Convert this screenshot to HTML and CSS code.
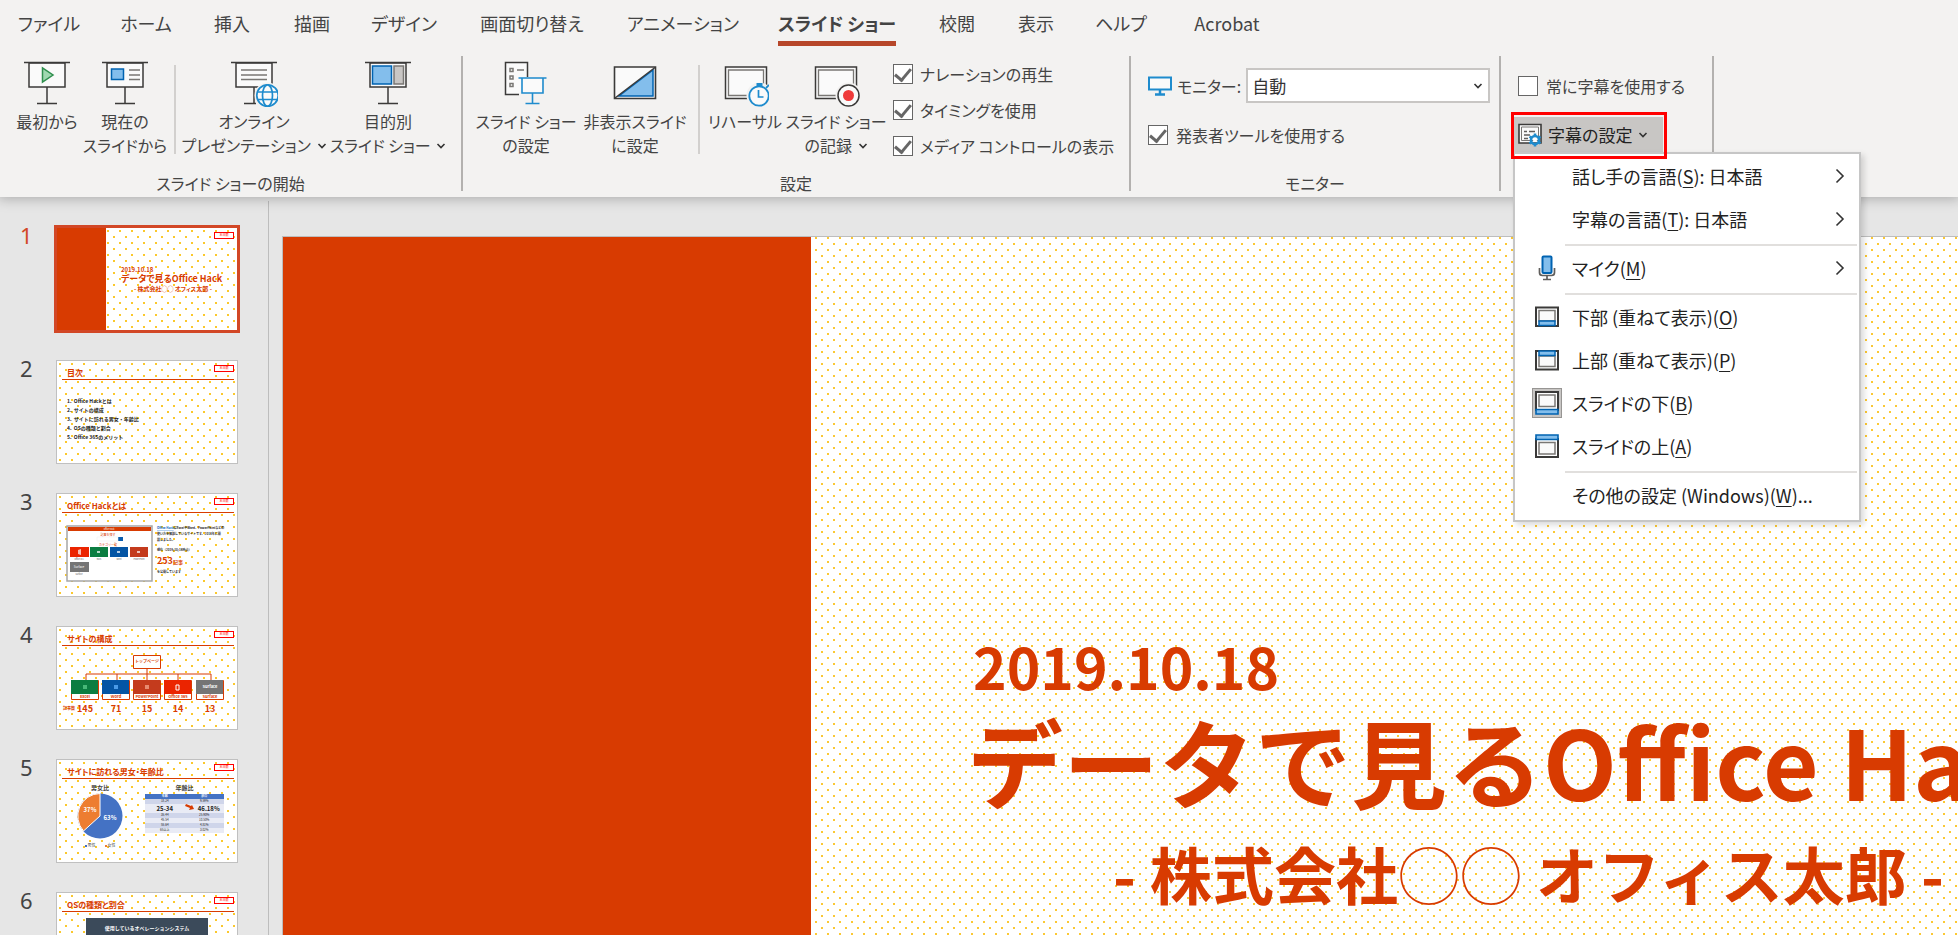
FILE: index.html
```html
<!DOCTYPE html>
<html lang="ja">
<head>
<meta charset="utf-8">
<title>スライド ショー</title>
<link rel="stylesheet" href="styles.css">
</head>
<body>
<svg class="defs" width="0" height="0" aria-hidden="true">
  <symbol id="chev" viewBox="0 0 10 8"><path d="M1.5 2 5 5.5 8.5 2" fill="none" stroke="#333" stroke-width="1.600"/></symbol>
  <symbol id="arrow" viewBox="0 0 10 16"><path d="M1.5 1.500 8 8 1.500 14.500" fill="none" stroke="#333" stroke-width="1.600"/></symbol>
</svg>
<header class="ribbon">
  <nav class="tabs">
    <button class="tab">ファイル</button>
    <button class="tab">ホーム</button>
    <button class="tab">挿入</button>
    <button class="tab">描画</button>
    <button class="tab">デザイン</button>
    <button class="tab">画面切り替え</button>
    <button class="tab">アニメーション</button>
    <button class="tab active"><span>スライド ショー</span></button>
    <button class="tab">校閲</button>
    <button class="tab">表示</button>
    <button class="tab">ヘルプ</button>
    <button class="tab">Acrobat</button>
  </nav>
  <div class="groups">
    <section class="group start">
      <div class="tools">
        <button class="big w78">
          <svg width="48" height="48" viewBox="0 0 48 48"><path d="M6 2h36v24H6z" fill="#fafafa" stroke="#3b3a39" stroke-width="1.500"/><path d="M1 1.500h46M24 26v16M14 42.500h20" stroke="#3b3a39" stroke-width="1.500"/><path d="M19.500 7v14l10.500-7z" fill="#9fd8b0" stroke="#2f8f4e" stroke-width="1.500"/></svg>
          <span>最初から</span>
        </button>
        <button class="big w78">
          <svg width="48" height="48" viewBox="0 0 48 48"><path d="M6 2h36v24H6z" fill="#fafafa" stroke="#3b3a39" stroke-width="1.500"/><path d="M1 1.500h46M24 26v16M14 42.500h20" stroke="#3b3a39" stroke-width="1.500"/><path d="M10.500 8h12v10.500h-12z" fill="#83beec" stroke="#0063b1" stroke-width="1.500"/><path d="M28 9h11M28 14h11M28 18.500h11" stroke="#797774" stroke-width="1.500"/></svg>
          <span>現在の<br>スライドから</span>
        </button>
        <i class="rule"></i>
        <button class="big w138">
          <svg width="48" height="48" viewBox="0 0 48 48"><path d="M6 2h36v24H6z" fill="#fafafa" stroke="#3b3a39" stroke-width="1.500"/><path d="M1 1.500h46M24 26v16M14 42.500h12" stroke="#3b3a39" stroke-width="1.500"/><path d="M11 9h26M11 14h26M11 18.500h26" stroke="#797774" stroke-width="1.500"/><circle cx="37.500" cy="34.500" r="13" fill="#f3f2f1"/><g fill="#fafafa" stroke="#1e8bcd" stroke-width="1.700"><circle cx="37.500" cy="34.500" r="10.700"/><ellipse cx="37.500" cy="34.500" rx="5" ry="10.700"/><path d="M27.500 31h20M27.500 38.500h20"/></g></svg>
          <span>オンライン<br>プレゼンテーション <svg class="chev" width="10" height="8"><use href="#chev"/></svg></span>
        </button>
        <button class="big w124">
          <svg width="48" height="48" viewBox="0 0 48 48"><path d="M6 2h36v24H6z" fill="#fafafa" stroke="#3b3a39" stroke-width="1.500"/><path d="M1 1.500h46M24 26v16M14 42.500h20" stroke="#3b3a39" stroke-width="1.500"/><path d="M8.500 5h19v18h-19z" fill="#83beec" stroke="#0063b1" stroke-width="1.500"/><path d="M30 5h9.500v18H30z" fill="#c8c6c4" stroke="#797774" stroke-width="1.500"/></svg>
          <span>目的別<br>スライド ショー <svg class="chev" width="10" height="8"><use href="#chev"/></svg></span>
        </button>
      </div>
      <h2>スライド ショーの開始</h2>
    </section>
    <section class="group setup">
      <div class="tools">
        <button class="big w98">
          <svg width="48" height="48" viewBox="0 0 48 48"><path d="M25.500 16V1.500h-22v32H17" fill="#fafafa" stroke="#3b3a39" stroke-width="1.500"/><path d="M8 7.500h3v3H8zM8 15h3v3H8zM8 22.500h3v3H8zM15 9h7" fill="none" stroke="#797774" stroke-width="1.500"/><path d="M20 17.500h20V32H20z" fill="#fafafa"/><path d="M20 17v15h21V17M16.500 17h28M30.500 32v10M23.500 42.500h14" fill="none" stroke="#1e8bcd" stroke-width="1.600"/></svg>
          <span>スライド ショー<br>の設定</span>
        </button>
        <button class="big w106">
          <svg width="48" height="48" viewBox="0 0 48 48"><path d="M3.500 6h41v31.500h-41z" fill="#fafafa" stroke="#3b3a39" stroke-width="1.600"/><path d="M42 9v26H8z" fill="#83beec" stroke="#0063b1" stroke-width="1.500"/><path d="M4 37 44 6.500" stroke="#3b3a39" stroke-width="1.500"/></svg>
          <span>非表示スライド<br>に設定</span>
        </button>
        <i class="rule"></i>
        <button class="big w74">
          <svg width="48" height="48" viewBox="0 0 48 48"><path d="M4.500 6h41v31.500h-41z" fill="#fafafa" stroke="#3b3a39" stroke-width="1.500"/><path d="M7.500 9h35v25.500h-35z" fill="none" stroke="#797774" stroke-width="1.300"/><circle cx="38.500" cy="34.500" r="13" fill="#f3f2f1"/><path d="M35.500 22h6v4h-6z" fill="#1e8bcd"/><path d="m45 27 3-3" stroke="#1e8bcd" stroke-width="1.800"/><circle cx="38" cy="35" r="9.700" fill="#fafafa" stroke="#1e8bcd" stroke-width="1.800"/><path d="M37.500 29V36h5" fill="none" stroke="#1e8bcd" stroke-width="1.700"/></svg>
          <span>リハーサル</span>
        </button>
        <button class="big w102">
          <svg width="48" height="48" viewBox="0 0 48 48"><path d="M3.500 6h41v31.500h-41z" fill="#fafafa" stroke="#3b3a39" stroke-width="1.500"/><path d="M6.500 9h35v25.500h-35z" fill="none" stroke="#797774" stroke-width="1.300"/><circle cx="36.500" cy="34.500" r="13" fill="#f3f2f1"/><circle cx="36.500" cy="34.500" r="10.500" fill="#fafafa" stroke="#3b3a39" stroke-width="1.500"/><circle cx="36.500" cy="34.500" r="5.500" fill="#ef3b3b"/></svg>
          <span>スライド ショー<br>の記録 <svg class="chev" width="10" height="8"><use href="#chev"/></svg></span>
        </button>
        <div class="checks">
          <label><input type="checkbox" checked>ナレーションの再生</label>
          <label><input type="checkbox" checked>タイミングを使用</label>
          <label><input type="checkbox" checked>メディア コントロールの表示</label>
        </div>
      </div>
      <h2>設定</h2>
    </section>
    <section class="group monitor">
      <div class="rows">
        <div class="row">
          <svg width="24" height="20" viewBox="0 0 24 20"><path d="M1 1.500h22v12H1z" fill="#fafafa" stroke="#1e8bcd" stroke-width="2"/><path d="M12 14v4M7 18.500h10" stroke="#1e8bcd" stroke-width="2.500"/></svg>
          <label for="mon">モニター:</label>
          <span class="select"><select id="mon"><option>自動</option></select><svg width="10" height="8"><use href="#chev"/></svg></span>
        </div>
        <label class="row"><input type="checkbox" checked>発表者ツールを使用する</label>
      </div>
      <h2>モニター</h2>
    </section>
    <section class="group caption">
      <div class="rows">
        <label class="row"><input type="checkbox">常に字幕を使用する</label>
        <div class="row drop">
          <button class="dropbtn">
            <svg width="24" height="24" viewBox="0 0 24 24"><path d="M1 1.500h22V20H1z" fill="#fafafa" stroke="#3b3a39" stroke-width="1.600"/><path d="M3.500 4h17v13.500h-17z" fill="none" stroke="#797774"/><path d="M6 8.500h3M11 8.500h6M6 12h6M6 15.500h4" stroke="#605e5c" stroke-width="1.400"/><g stroke="#1e8bcd" fill="none"><circle cx="17" cy="17" r="4" stroke-width="2.600"/><path d="M17 10.500v3M17 20.500v3M11.500 13.700l2.600 1.500M19.900 18.800l2.600 1.500M11.500 20.300l2.600-1.500M19.900 15.200l2.600-1.500" stroke-width="2.600"/></g><circle cx="17" cy="17" r="2" fill="#fff"/></svg>
            <span>字幕の設定</span><svg width="10" height="8"><use href="#chev"/></svg>
          </button>
          <div class="menu" role="menu">
            <button role="menuitem"><i></i><span>話し手の言語(<u>S</u>): 日本語</span><svg width="10" height="16"><use href="#arrow"/></svg></button>
            <button role="menuitem"><i></i><span>字幕の言語(<u>T</u>): 日本語</span><svg width="10" height="16"><use href="#arrow"/></svg></button>
            <hr>
            <button role="menuitem"><i><svg width="24" height="26" viewBox="0 0 24 26"><path d="M4.500 13v4.500q0 3 3 3h9q3 0 3-3V13M12 20v4M8 24.500h8" fill="none" stroke="#605e5c" stroke-width="1.700"/><rect x="7.500" y="1.500" width="9" height="16.500" rx="1" fill="#83beec" stroke="#0063b1" stroke-width="2"/></svg></i><span>マイク(<u>M</u>)</span><svg width="10" height="16"><use href="#arrow"/></svg></button>
            <hr>
            <button role="menuitem"><i><svg width="24" height="24" viewBox="0 0 24 24"><path d="M1 2.500h22V21H1z" fill="#fff" stroke="#3b3a39" stroke-width="2"/><path d="M4 5.500h16V16H4z" fill="#fafafa" stroke="#797774" stroke-width="1.500"/><path d="M4 16h16v4.500H4z" fill="#83beec" stroke="#0063b1" stroke-width="1.500"/></svg></i><span>下部 (重ねて表示)(<u>O</u>)</span></button>
            <button role="menuitem"><i><svg width="24" height="24" viewBox="0 0 24 24"><path d="M1 3h22v18.500H1z" fill="#fff" stroke="#3b3a39" stroke-width="2"/><path d="M4 8h16v10.500H4z" fill="#fafafa" stroke="#797774" stroke-width="1.500"/><path d="M4 3h16v4.500H4z" fill="#83beec" stroke="#0063b1" stroke-width="1.500"/></svg></i><span>上部 (重ねて表示)(<u>P</u>)</span></button>
            <button role="menuitem"><i class="chosen"><svg width="24" height="24" viewBox="0 0 24 24"><path d="M1 1h22v18H1z" fill="#fff" stroke="#3b3a39" stroke-width="2"/><path d="M4 4h16v11.500H4z" fill="#fafafa" stroke="#797774" stroke-width="1.500"/><path d="M1 18.500h22V23H1z" fill="#83beec" stroke="#0063b1" stroke-width="1.600"/></svg></i><span>スライドの下(<u>B</u>)</span></button>
            <button role="menuitem"><i><svg width="24" height="24" viewBox="0 0 24 24"><path d="M1 5h22v18H1z" fill="#fff" stroke="#3b3a39" stroke-width="2"/><path d="M4 8.500h16V20H4z" fill="#fafafa" stroke="#797774" stroke-width="1.500"/><path d="M1 1h22v4.500H1z" fill="#83beec" stroke="#0063b1" stroke-width="1.600"/></svg></i><span>スライドの上(<u>A</u>)</span></button>
            <hr>
            <button role="menuitem"><i></i><span>その他の設定 (Windows)(<u>W</u>)...</span></button>
          </div>
        </div>
      </div>
    </section>
  </div>
</header>
<main class="work">
  <aside class="pane">
    <div class="item sel"><b>1</b>
      <div class="thumb cover"><div class="band"></div><div class="badge">本日限</div>
        <div class="ctext"><p class="d">2019.10.18</p><p class="t">データで見るOffice Hack</p><p class="s">- 株式会社◯◯ オフィス太郎 -</p></div></div></div>
    <div class="item"><b>2</b>
      <div class="thumb"><div class="badge">本日限</div><h3>目次</h3>
        <ol><li>1.&nbsp; Office Hackとは</li><li>2.&nbsp; サイトの構成</li><li>3.&nbsp; サイトに訪れる男女・年齢比</li><li>4.&nbsp; OSの種類と割合</li><li>5.&nbsp; Office 365のメリット</li></ol></div></div>
    <div class="item"><b>3</b>
      <div class="thumb"><div class="badge">本日限</div><h3>Office Hackとは</h3>
        <svg class="body" viewBox="0 19 180 83">
          <path d="M10 32h85v55H10z" fill="#fff" stroke="#a6a6a6" stroke-width="1.500"/><path d="M11 33h83v4H11z" fill="#d83b01"/>
          <text x="52" y="36" font-size="2" fill="#fff" text-anchor="middle">Office Hack</text>
          <text x="51" y="42" font-size="3" fill="#d83b01" text-anchor="middle">記事を探す</text><path d="M61 43h5v4h-5z" fill="#0b5cad"/><path d="M40 43h21v4H40z" fill="none" stroke="#eee" stroke-width=".5"/>
          <text x="51" y="52" font-size="3" fill="#d83b01" text-anchor="middle">カテゴリ一覧</text>
          <path d="M13 53h19v10H13z" fill="#eb2400"/><path d="M33 53h18v10H33z" fill="#0b7d41"/><path d="M53 53h18v10H53z" fill="#0455a4"/><path d="M73 53h18v10H73z" fill="#c43b1d"/><path d="M13 68h19v10H13z" fill="#757575"/>
          <path d="M21 56l3-1v6l-3-1zM40 57h3v2h-3zM60 57h3v2h-3zM80 57h3v2h-3z" fill="#fff" opacity=".7"/>
          <text x="22" y="74" font-size="3" fill="#fff" text-anchor="middle">Surface</text>
          <g font-size="2" fill="#555" text-anchor="middle"><text x="22" y="66">Office 365</text><text x="42" y="66">Excel</text><text x="62" y="66">Word</text><text x="82" y="66">PowerPoint</text><text x="22" y="81">Surface</text></g>
          <g font-size="3" font-weight="700" fill="#222"><text x="100" y="35"><tspan fill="#0563c1" text-decoration="underline">Office Hack</tspan>はExcelやWord、PowerPointなどの</text><text x="100" y="41">使い方を解説しているサイトです。2018年に開</text><text x="100" y="47">設しました。</text><text x="100" y="57">現在（2019/10/18時点）</text><text x="100" y="79">を公開しています</text></g>
          <text x="100" y="70" font-size="9" font-weight="700" fill="#d83b01">253<tspan font-size="5">記事</tspan></text>
        </svg></div></div>
    <div class="item"><b>4</b>
      <div class="thumb"><div class="badge">本日限</div><h3>サイトの構成</h3>
        <svg class="body" viewBox="0 19 180 83">
          <path d="M90 42v11M29 53v-6h125v6M60 47v6M121 47v6" fill="none" stroke="#d83b01"/>
          <g fill="#fff" stroke="#d83b01"><path d="M76.500 28.500h27v13h-27zM14.500 53.500h27v19h-27zM45.500 53.500h27v19h-27zM76.500 53.500h27v19h-27zM107.500 53.500h27v19h-27zM139.500 53.500h27v19h-27z"/></g>
          <path d="M14 53h27v14H14z" fill="#0b7d41"/><path d="M45 53h27v14H45z" fill="#0455a4"/><path d="M76 53h27v14H76z" fill="#c43b1d"/><path d="M107 53h27v14h-27z" fill="#eb2400"/><path d="M139 53h27v14h-27z" fill="#757575"/>
          <path d="M26 58h4v4h-4z" fill="#48b878"/><path d="M57 58h4v4h-4z" fill="#4a9be8"/><path d="M88 58h4v4h-4z" fill="#e88b70"/><path d="M119 58h3v5h-3z" fill="none" stroke="#fff"/>
          <g font-size="4" font-weight="700" fill="#d83b01" text-anchor="middle"><text x="90" y="36">トップページ</text><text x="28" y="71">Excel</text><text x="59" y="71">Word</text><text x="90" y="71">PowerPoint</text><text x="121" y="71">Office 365</text><text x="153" y="71">Surface</text><text x="12" y="83">記事数</text><text x="153" y="61" fill="#fff">Surface</text></g>
          <g font-size="9" font-weight="700" fill="#d83b01" text-anchor="middle"><text x="28" y="85">145</text><text x="59" y="85">71</text><text x="90" y="85">15</text><text x="121" y="85">14</text><text x="153" y="85">13</text></g>
        </svg></div></div>
    <div class="item"><b>5</b>
      <div class="thumb"><div class="badge">本日限</div><h3>サイトに訪れる男女・年齢比</h3>
        <div class="charts">
          <figure><figcaption>男女比</figcaption>
            <svg width="52" height="46" viewBox="0 0 52 46"><circle cx="26" cy="23" r="22.500" fill="#4472c4"/><path d="M26 23V.5A22.500 22.500 0 0 0 9.500 38z" fill="#ed7d31" stroke="#fff"/><g font-size="6" font-weight="700" fill="#fff" text-anchor="middle"><text x="16" y="19">37%</text><text x="36" y="27">63%</text></g></svg>
            <div class="legend"><span class="m">男性</span><span class="f">女性</span></div></figure>
          <figure><figcaption>年齢比</figcaption>
            <table><tr><th>年齢</th><th>割合</th></tr><tr><td>18-24</td><td>9.59%</td></tr><tr class="hot"><td>25-34</td><td><svg width="9" height="7" viewBox="0 0 9 7"><path d="M1 0l5 2 1-1 2 4-5 1 1-2-5-2z" fill="#d83b01"/></svg>46.18%</td></tr><tr><td>35-44</td><td>25.90%</td></tr><tr><td>45-54</td><td>10.50%</td></tr><tr><td>55-64</td><td>4.81%</td></tr><tr><td>65以上</td><td>3.02%</td></tr></table></figure>
        </div></div></div>
    <div class="item"><b>6</b>
      <div class="thumb"><div class="badge">本日限</div><h3>OSの種類と割合</h3><div class="os">使用しているオペレーションシステム</div></div></div>
  </aside>
  <section class="canvas">
    <div class="slide">
      <div class="band"></div>
      <div class="copy">
        <p class="date">2019.10.18</p>
        <h1>データで見るOffice Hack</h1>
        <p class="sub">- 株式会社<span>◯◯</span> オフィス太郎 -</p>
      </div>
    </div>
  </section>
</main>
</body>
</html>
```
FILE: styles.css
```css
* { box-sizing: border-box; }
body {
  margin: 0;
  height: 100vh;
  display: flex;
  flex-direction: column;
  overflow: hidden;
  background: #e6e6e6;
  color: #444;
  font-family: "Noto Sans CJK JP", sans-serif;
  font-size: 16px;
  font-feature-settings: "palt";
}
button, select, input { font: inherit; font-feature-settings: inherit; color: inherit; margin: 0; }
button { border: 0; padding: 0; background: none; white-space: nowrap; }
h1, h2, h3, p, ol, figure { margin: 0; padding: 0; }
.defs { position: absolute; }

/* Ribbon */
.ribbon {
  position: relative;
  z-index: 2;
  flex: none;
  background: #f3f2f1;
  box-shadow: 0 0 12px 2px rgba(0, 0, 0, .25);
}
.tabs {
  display: grid;
  grid-template-columns: 98px 96px 76px 84px 100px 156px 146px 162px 78px 80px 90px 122px;
  height: 46px;
}
.tab { font-size: 18px; line-height: 46px; display: flex; justify-content: center; }
.tab.active { font-weight: 700; }
.tab.active span { border-bottom: 5px solid #b7472a; height: 46px; }
.groups { display: flex; padding: 10px 0 6px; height: 151px; }
.group {
  display: flex;
  flex-direction: column;
  justify-content: space-between;
  border-right: 2px solid #b3b1af;
}
.group h2 { font-size: 16px; font-weight: 400; line-height: 16px; text-align: center; }
.start { width: 463px; }
.setup { width: 668px; }
.monitor { width: 370px; }
.caption { width: 213px; }
.tools { display: flex; padding: 5px 0 0 8px; }
.setup .tools { padding-left: 14px; }
.big { display: flex; flex-direction: column; align-items: center; flex: none; }
.big > svg { display: block; flex: none; }
.big > span { line-height: 24px; }
.chev { margin-left: 2px; vertical-align: 2px; }
.w78 { width: 78px; }
.w138 { width: 138px; }
.w124 { width: 124px; margin-left: 3px; }
.w98 { width: 98px; }
.w106 { width: 106px; margin-left: 7px; }
.w74 { width: 74px; }
.w102 { width: 102px; margin-left: 3px; }
.rule { width: 2px; height: 89px; margin: 4px 9px 0 10px; background: #d2d0ce; flex: none; }
.setup .rule { margin-right: 8px; }
.checks { display: flex; flex-direction: column; margin: -5px 0 0 6px; }
.checks label { display: flex; align-items: center; gap: 7px; height: 36px; white-space: nowrap; }
input[type="checkbox"] {
  appearance: none;
  width: 20px;
  height: 20px;
  flex: none;
  background: #fff;
  border: 1px solid #666;
  display: grid;
  place-items: center;
}
input:checked::before {
  content: "";
  width: 7px;
  height: 13px;
  margin-bottom: 4px;
  border: solid #666;
  border-width: 0 3px 3px 0;
  transform: rotate(40deg);
}
.rows { padding: 5px 9px 0 17px; }
.row { display: flex; align-items: center; gap: 8px; height: 49px; white-space: nowrap; }
.monitor .row:first-child { gap: 5px; }
.select { display: flex; align-items: center; flex: 1; height: 35px; padding-right: 5px; border: 2px solid #c8c6c4; background: #fff; }
.select select { appearance: none; border: 0; background: none; flex: 1; padding: 0 4px; font-size: 17px; color: #333; }

/* Caption drop-down */
.drop { position: relative; margin-left: -4px; }
.dropbtn {
  position: relative;
  display: flex;
  align-items: center;
  gap: 6px;
  width: 149px;
  height: 36px;
  padding: 0 4px;
  background: #c8c6c4;
  color: #222;
  font-size: 17px;
}
.dropbtn::after { content: ""; position: absolute; inset: -5px -4px -6px -3px; border: 3px solid #f00; z-index: 3; }
.menu {
  position: absolute;
  left: -1px;
  top: 42px;
  width: 348px;
  padding-bottom: 4px;
  border: 2px solid #c6c6c6;
  background: #fff;
  color: #222;
  font-size: 18px;
  box-shadow: 3px 3px 6px rgba(0, 0, 0, .15);
}
.menu button { display: flex; align-items: center; width: 100%; height: 43px; padding: 0 14px 0 17px; }
.menu i { width: 30px; height: 30px; margin-right: 10px; display: grid; place-items: center; flex: none; }
.menu span { flex: 1; text-align: left; }
.menu u { text-underline-offset: 3px; text-decoration-thickness: 1px; }
.menu hr { height: 2px; margin: 4px 2px 0 50px; border: 0; background: #e1dfdd; }
.menu .chosen { background: #c8c6c4; outline: 1px solid #979593; outline-offset: -1px; }

/* Slide list */
.work { flex: 1; min-height: 0; display: flex; overflow: hidden; }
.pane {
  width: 269px;
  flex: none;
  margin-top: 4px;
  padding-top: 26px;
  border-right: 1px solid #bdbdbd;
  display: flex;
  flex-direction: column;
  gap: 29px;
}
.item { display: flex; flex: none; }
.item b { width: 56px; padding-left: 20px; flex: none; font: 400 22px/16px "Noto Sans", sans-serif; }
.sel b { color: #d24726; }
.thumb, .slide { background-color: #fff; background-size: 12px 12px; }
.thumb {
  position: relative;
  width: 182px;
  height: 104px;
  border: 1px solid #c0c0c0;
  overflow: hidden;
  background-image: conic-gradient(from 90deg at 10px 10px, #fbc82c 25%, transparent 0), conic-gradient(from 90deg at 10px 10px, #fbc82c 25%, transparent 0);
  background-position: 4px 4px, 10px 10px;
  color: #222;
}
.sel .thumb { border-color: #fff; outline: 3px solid #d24726; outline-offset: -1px; }
.badge {
  position: absolute;
  right: 3px;
  top: 4px;
  width: 20px;
  height: 7px;
  border: 1px solid #f00;
  background: #fff;
  color: #f00;
  font-size: 3px;
  line-height: 5px;
  text-align: center;
}
.thumb h3 { height: 19px; margin: 0 3px 0 5px; padding-left: 5px; border-bottom: 1px solid #d83b01; color: #d83b01; font-size: 8px; line-height: 23px; }
.thumb ol { list-style: none; padding: 16px 0 0 10px; font-size: 5px; font-weight: 700; line-height: 9px; font-feature-settings: normal; }
.thumb .body { display: block; width: 100%; font-feature-settings: normal; }
.cover { display: flex; align-items: center; }
.cover .band { width: 49px; height: 100%; background: #d83b01; }
.ctext { padding-left: 15px; color: #d83b01; font-weight: 700; white-space: nowrap; }
.ctext .d { font-size: 6px; line-height: 7px; }
.ctext .t { font-size: 9px; line-height: 11px; }
.ctext .s { font-size: 6px; line-height: 9px; padding-left: 13px; }
.charts { display: flex; gap: 19px; padding: 4px 0 0 17px; }
.charts figcaption { font-size: 6px; font-weight: 700; line-height: 10px; text-align: center; color: #444; }
.charts svg { display: block; }
.legend { display: flex; justify-content: center; gap: 9px; font-size: 4px; line-height: 12px; color: #444; }
.legend span::before { content: ""; display: inline-block; width: 2px; height: 2px; margin-right: 1px; background: #4472c4; }
.legend .f::before { background: #ed7d31; }
.charts table { width: 79px; margin-top: 1px; border-collapse: collapse; table-layout: fixed; font-size: 3px; line-height: 5px; text-align: center; }
.charts th { padding: 0; background: #4472c4; color: #fff; }
.charts td { padding: 0; background: #cfd5ea; }
.charts tr:nth-child(odd) td { background: #e9ebf5; }
.charts .hot td { font-size: 6px; font-weight: 700; line-height: 9px; }
.charts td svg { float: left; }
.os { width: 122px; height: 60px; margin: 6px 0 0 29px; background: #3b4a5a; color: #fff; font-size: 5px; font-weight: 700; line-height: 20px; text-align: center; font-feature-settings: normal; }

/* Slide being edited */
.canvas { flex: 1; min-width: 0; padding: 39px 0 0 13px; overflow: hidden; }
.slide {
  height: 100%;
  display: flex;
  border: solid #bdbdbd;
  border-width: 1px 0 0 1px;
  background-image: conic-gradient(from 90deg at 10px 10px, #fbc834 25%, transparent 0), conic-gradient(from 90deg at 10px 10px, #fbc834 25%, transparent 0);
  background-position: 6px 2px, 0 8px;
}
.slide > .band { width: 528px; flex: none; background: #d83b01; }
.copy { padding: 386px 0 0 156px; color: #d83b01; font-weight: 700; white-space: nowrap; font-feature-settings: normal; }
.date { font-size: 57px; line-height: 84px; padding-left: 6px; }
.copy h1 { font-size: 96px; line-height: 106px; }
.sub { font-size: 62px; line-height: 120px; padding-left: 146px; }
.sub span { font-weight: 300; }
```
